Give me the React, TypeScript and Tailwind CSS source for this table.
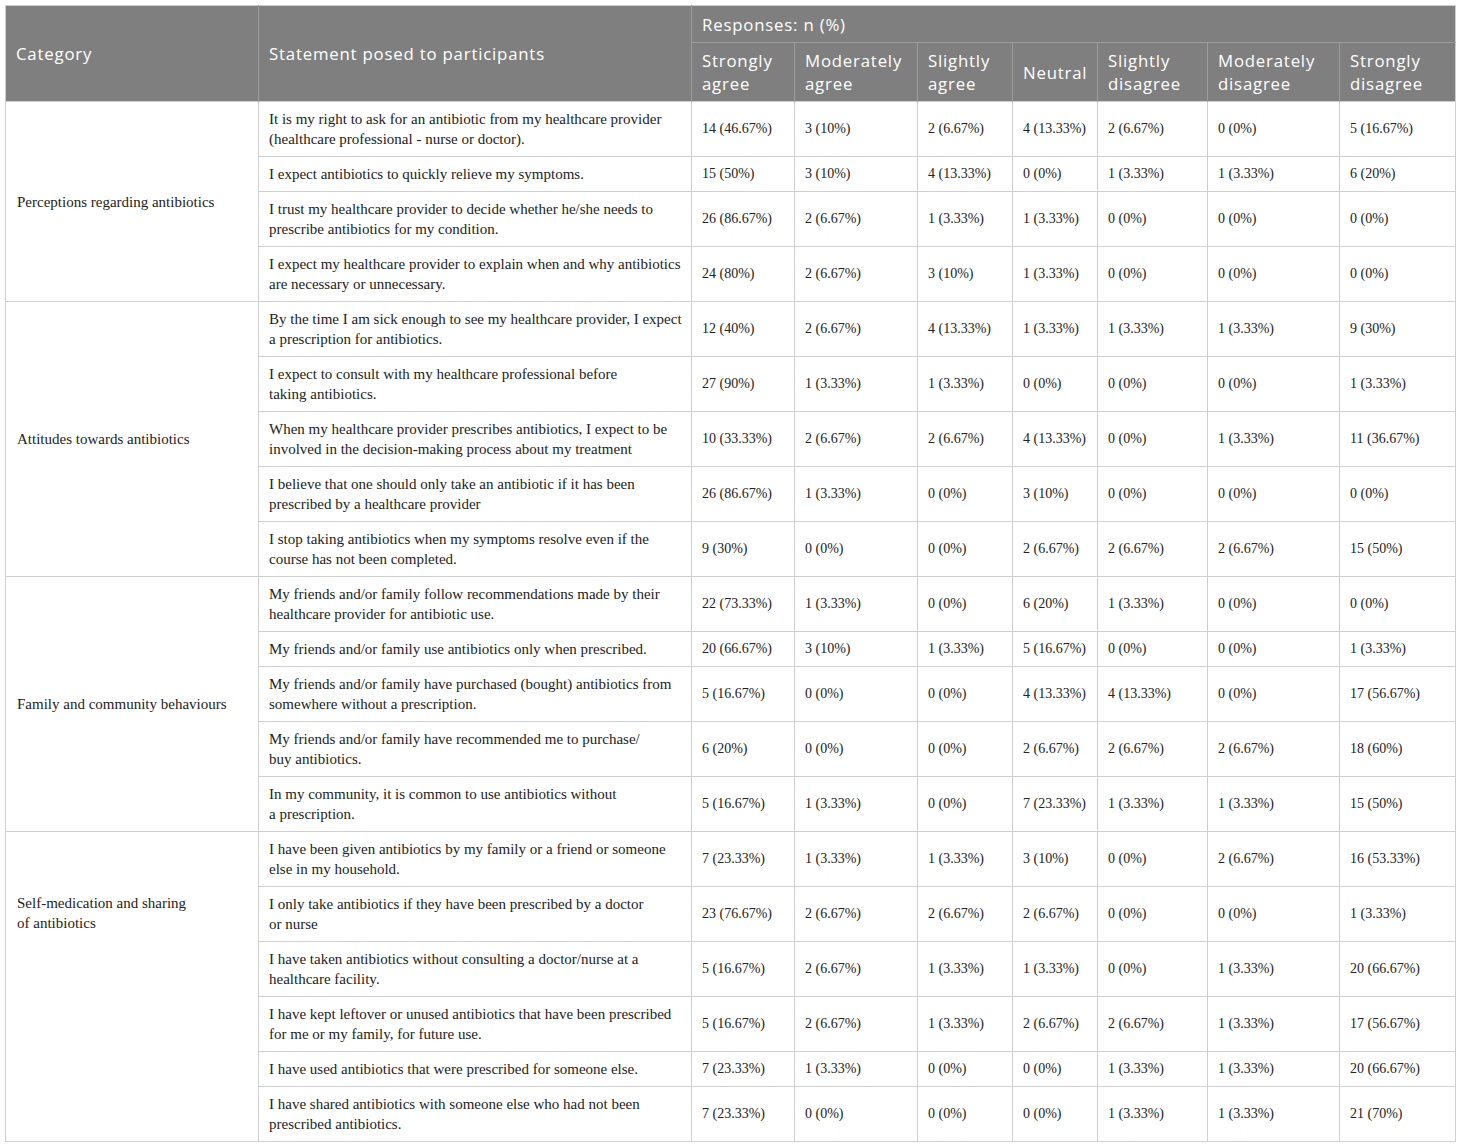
import React from "react";

type Row = { s: string[]; v: string[] };
type Group = { cat: string[]; rows: Row[]; top?: boolean };

const groups: Group[] = [
  {
    cat: ["Perceptions regarding antibiotics"],
    rows: [
      { s: ["It is my right to ask for an antibiotic from my healthcare provider", "(healthcare professional - nurse or doctor)."], v: ["14 (46.67%)", "3 (10%)", "2 (6.67%)", "4 (13.33%)", "2 (6.67%)", "0 (0%)", "5 (16.67%)"] },
      { s: ["I expect antibiotics to quickly relieve my symptoms."], v: ["15 (50%)", "3 (10%)", "4 (13.33%)", "0 (0%)", "1 (3.33%)", "1 (3.33%)", "6 (20%)"] },
      { s: ["I trust my healthcare provider to decide whether he/she needs to", "prescribe antibiotics for my condition."], v: ["26 (86.67%)", "2 (6.67%)", "1 (3.33%)", "1 (3.33%)", "0 (0%)", "0 (0%)", "0 (0%)"] },
      { s: ["I expect my healthcare provider to explain when and why antibiotics", "are necessary or unnecessary."], v: ["24 (80%)", "2 (6.67%)", "3 (10%)", "1 (3.33%)", "0 (0%)", "0 (0%)", "0 (0%)"] },
    ],
  },
  {
    cat: ["Attitudes towards antibiotics"],
    rows: [
      { s: ["By the time I am sick enough to see my healthcare provider, I expect", "a prescription for antibiotics."], v: ["12 (40%)", "2 (6.67%)", "4 (13.33%)", "1 (3.33%)", "1 (3.33%)", "1 (3.33%)", "9 (30%)"] },
      { s: ["I expect to consult with my healthcare professional before", "taking antibiotics."], v: ["27 (90%)", "1 (3.33%)", "1 (3.33%)", "0 (0%)", "0 (0%)", "0 (0%)", "1 (3.33%)"] },
      { s: ["When my healthcare provider prescribes antibiotics, I expect to be", "involved in the decision-making process about my treatment"], v: ["10 (33.33%)", "2 (6.67%)", "2 (6.67%)", "4 (13.33%)", "0 (0%)", "1 (3.33%)", "11 (36.67%)"] },
      { s: ["I believe that one should only take an antibiotic if it has been", "prescribed by a healthcare provider"], v: ["26 (86.67%)", "1 (3.33%)", "0 (0%)", "3 (10%)", "0 (0%)", "0 (0%)", "0 (0%)"] },
      { s: ["I stop taking antibiotics when my symptoms resolve even if the", "course has not been completed."], v: ["9 (30%)", "0 (0%)", "0 (0%)", "2 (6.67%)", "2 (6.67%)", "2 (6.67%)", "15 (50%)"] },
    ],
  },
  {
    cat: ["Family and community behaviours"],
    rows: [
      { s: ["My friends and/or family follow recommendations made by their", "healthcare provider for antibiotic use."], v: ["22 (73.33%)", "1 (3.33%)", "0 (0%)", "6 (20%)", "1 (3.33%)", "0 (0%)", "0 (0%)"] },
      { s: ["My friends and/or family use antibiotics only when prescribed."], v: ["20 (66.67%)", "3 (10%)", "1 (3.33%)", "5 (16.67%)", "0 (0%)", "0 (0%)", "1 (3.33%)"] },
      { s: ["My friends and/or family have purchased (bought) antibiotics from", "somewhere without a prescription."], v: ["5 (16.67%)", "0 (0%)", "0 (0%)", "4 (13.33%)", "4 (13.33%)", "0 (0%)", "17 (56.67%)"] },
      { s: ["My friends and/or family have recommended me to purchase/", "buy antibiotics."], v: ["6 (20%)", "0 (0%)", "0 (0%)", "2 (6.67%)", "2 (6.67%)", "2 (6.67%)", "18 (60%)"] },
      { s: ["In my community, it is common to use antibiotics without", "a prescription."], v: ["5 (16.67%)", "1 (3.33%)", "0 (0%)", "7 (23.33%)", "1 (3.33%)", "1 (3.33%)", "15 (50%)"] },
    ],
  },
  {
    cat: ["Self-medication and sharing", "of antibiotics"],
    top: true,
    rows: [
      { s: ["I have been given antibiotics by my family or a friend or someone", "else in my household."], v: ["7 (23.33%)", "1 (3.33%)", "1 (3.33%)", "3 (10%)", "0 (0%)", "2 (6.67%)", "16 (53.33%)"] },
      { s: ["I only take antibiotics if they have been prescribed by a doctor", "or nurse"], v: ["23 (76.67%)", "2 (6.67%)", "2 (6.67%)", "2 (6.67%)", "0 (0%)", "0 (0%)", "1 (3.33%)"] },
      { s: ["I have taken antibiotics without consulting a doctor/nurse at a", "healthcare facility."], v: ["5 (16.67%)", "2 (6.67%)", "1 (3.33%)", "1 (3.33%)", "0 (0%)", "1 (3.33%)", "20 (66.67%)"] },
      { s: ["I have kept leftover or unused antibiotics that have been prescribed", "for me or my family, for future use."], v: ["5 (16.67%)", "2 (6.67%)", "1 (3.33%)", "2 (6.67%)", "2 (6.67%)", "1 (3.33%)", "17 (56.67%)"] },
      { s: ["I have used antibiotics that were prescribed for someone else."], v: ["7 (23.33%)", "1 (3.33%)", "0 (0%)", "0 (0%)", "1 (3.33%)", "1 (3.33%)", "20 (66.67%)"] },
      { s: ["I have shared antibiotics with someone else who had not been", "prescribed antibiotics."], v: ["7 (23.33%)", "0 (0%)", "0 (0%)", "0 (0%)", "1 (3.33%)", "1 (3.33%)", "21 (70%)"] },
    ],
  },
];

const heads = [
  ["Strongly", "agree"],
  ["Moderately", "agree"],
  ["Slightly", "agree"],
  ["Neutral"],
  ["Slightly", "disagree"],
  ["Moderately", "disagree"],
  ["Strongly", "disagree"],
];

const widths = [253, 433, 103, 123, 95, 85, 110, 132, 116];

function Lines({ l }: { l: string[] }) {
  return (
    <>
      {l.map((t, i) => (
        <span key={i} className="block whitespace-nowrap">
          {t}
        </span>
      ))}
    </>
  );
}

export default function App() {
  const bodyFont = { fontFamily: '"Liberation Serif", "Times New Roman", serif' };
  return (
    <div className="bg-white w-[1460px] min-h-[1144px] p-[5px]">
      <table className="table-fixed border-collapse w-[1450px] border border-[#cfcfcf]">
        <colgroup>
          {widths.map((w, i) => (
            <col key={i} style={{ width: w }} />
          ))}
        </colgroup>
        <thead className="bg-[#7f7f7f] text-white text-[16.8px] tracking-[0.8px] leading-[23px] font-['Open_Sans',sans-serif]">
          <tr className="h-[37px]">
            <th rowSpan={2} className="font-normal text-left align-middle pl-[10px] pr-2 border-r border-[#9c9c9c]">
              Category
            </th>
            <th rowSpan={2} className="font-normal text-left align-middle pl-[10px] pr-2 border-r border-[#9c9c9c]">
              Statement posed to participants
            </th>
            <th colSpan={7} className="font-normal text-left align-middle pl-[10px] border-b border-[#9c9c9c]">
              Responses: n (%)
            </th>
          </tr>
          <tr className="h-[59px]">
            {heads.map((h, i) => (
              <th
                key={i}
                className={`font-normal text-left align-middle pl-[10px] pr-1 ${i < 6 ? "border-r border-[#9c9c9c]" : ""}`}
              >
                <Lines l={h} />
              </th>
            ))}
          </tr>
        </thead>
        <tbody className="text-[15px] leading-[20px] text-[#222]" style={bodyFont}>
          {groups.map((g, gi) =>
            g.rows.map((r, ri) => (
              <tr key={`${gi}-${ri}`} className={r.s.length > 1 ? "h-[55px]" : "h-[35px]"}>
                {ri === 0 && (
                  <td
                    rowSpan={g.rows.length}
                    className={`pl-[11px] pr-2 border border-[#cfcfcf] ${g.top ? "align-top pt-[61px]" : "align-middle"}`}
                  >
                    <Lines l={g.cat} />
                  </td>
                )}
                <td className="align-middle pl-[10px] pr-2 border border-[#cfcfcf]">
                  <Lines l={r.s} />
                </td>
                {r.v.map((v, vi) => (
                  <td key={vi} className="align-middle pl-[10px] pr-1 border border-[#cfcfcf] whitespace-nowrap text-[14px]">
                    {v}
                  </td>
                ))}
              </tr>
            ))
          )}
        </tbody>
      </table>
    </div>
  );
}
